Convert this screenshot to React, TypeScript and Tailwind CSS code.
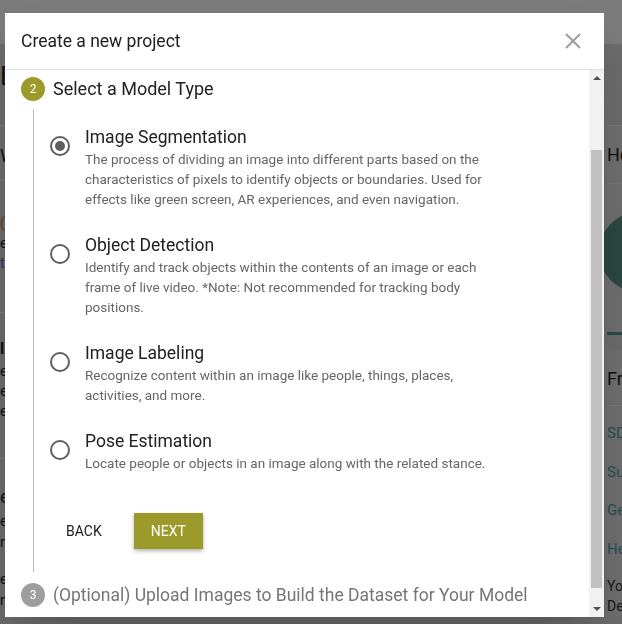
const modelTypes = [
  {
    title: "Image Segmentation",
    description:
      "The process of dividing an image into different parts based on the characteristics of pixels to identify objects or boundaries. Used for effects like green screen, AR experiences, and even navigation.",
    selected: true,
  },
  {
    title: "Object Detection",
    description:
      "Identify and track objects within the contents of an image or each frame of live video. *Note: Not recommended for tracking body positions.",
    selected: false,
  },
  {
    title: "Image Labeling",
    description: "Recognize content within an image like people, things, places, activities, and more.",
    selected: false,
  },
  {
    title: "Pose Estimation",
    description: "Locate people or objects in an image along with the related stance.",
    selected: false,
  },
]

function Radio({ checked }: { checked: boolean }) {
  return (
    <div className="mt-[11px] w-5 h-5 shrink-0 rounded-full border-2 border-[#5f5f5f] flex items-center justify-center">
      {checked && <div className="w-[10px] h-[10px] rounded-full bg-[#5f5f5f]" />}
    </div>
  )
}

function BackgroundPage() {
  return (
    <div className="min-h-[624px] bg-[#d8d8d8] text-[#222]">
      {/* top bar */}
      <div className="h-11 bg-[#f6f6f6]" />
      <div className="flex">
        {/* left column */}
        <div className="w-[596px] shrink-0">
          <div className="h-[81px] pt-4 text-[26px] leading-8">Edge</div>
          <div className="border-t border-[#f2f2f2] h-[55px] pt-4 text-lg">Welcome</div>
          <div className="border-t border-[#f2f2f2] h-[132px] pt-8 text-sm leading-5">
            <div className="text-[#c8741c]">(</div>
            <div>es</div>
            <div className="text-[#3a6ed0]">t</div>
          </div>
          <div className="border-t border-[#f2f2f2] h-[146px] pt-6 text-sm leading-5">
            <div className="font-bold text-base">ls</div>
            <div>e</div>
            <div>e</div>
            <div>e</div>
          </div>
          <div className="border-t border-[#f2f2f2] pt-6 text-sm leading-[21px]">
            <div className="text-lg">e</div>
            <div>e</div>
            <div>ne</div>
            <div className="mt-4">e</div>
            <div>ne</div>
          </div>
        </div>
        {/* right column */}
        <div className="w-[260px] shrink-0 pl-[11px]">
          <div className="mt-[81px] bg-[#dedede] border-t border-[#f2f2f2]">
            <div className="h-[57px] flex items-center text-lg">Help center</div>
            <div className="border-t border-[#f2f2f2] h-[149px] pt-7">
              <div className="w-20 h-20 rounded-full bg-[#568c80] -ml-2" />
            </div>
            <div className="h-[3px] bg-[#55948a]" />
          </div>
          <div className="mt-[14px] bg-[#dedede]">
            <div className="h-[56px] flex items-end pb-3 text-lg">Frequently asked</div>
            <div className="border-t border-[#f2f2f2] pt-4 text-[15px] text-[#4f9ba0] space-y-[16px]">
              <div>SDK</div>
              <div>Support</div>
              <div>Get started</div>
              <div>Help</div>
            </div>
            <div className="mt-4 text-sm leading-5 text-[#333]">
              <div>You</div>
              <div>Details</div>
            </div>
          </div>
        </div>
      </div>
    </div>
  )
}

export default function App() {
  return (
    <div className="relative w-[622px] h-[624px] overflow-hidden font-['Roboto',sans-serif]">
      <BackgroundPage />

      {/* dimmed overlay */}
      <div className="fixed inset-0 bg-black/50 pl-[5px] pt-[13px]">
        <div className="w-[599px] h-[604px] bg-white shadow-2xl flex flex-col">
          {/* header */}
          <div className="h-[57px] shrink-0 flex items-center justify-between pl-4 pr-[23px] border-b border-[#e0e0e0]">
            <h2 className="text-[17.5px] text-[#212121]">Create a new project</h2>
            <button className="text-[#9e9e9e]">
              <svg width="16" height="16" viewBox="0 0 16 16" fill="none" stroke="currentColor" strokeWidth="2">
                <path d="M1 1L15 15M15 1L1 15" />
              </svg>
            </button>
          </div>

          {/* body */}
          <div className="flex flex-1 min-h-0">
            <div className="flex-1 overflow-hidden pl-4 pt-[5px]">
              {/* step 2 */}
              <div className="flex items-center gap-2">
                <div className="w-6 h-6 rounded-full bg-[#9c9a2b] text-white text-xs flex items-center justify-center">
                  2
                </div>
                <span className="text-[18px] text-[#212121]">Select a Model Type</span>
              </div>

              <div className="ml-3 mt-[7px] border-l border-[#bdbdbd] pl-4 pt-4 pb-[23px]">
                <div className="flex flex-col gap-6">
                  {modelTypes.map((m) => (
                    <label key={m.title} className="flex items-start gap-[15px]">
                      <Radio checked={m.selected} />
                      <div>
                        <div className="text-[17.5px] leading-6 text-[#212121]">{m.title}</div>
                        <p className="max-w-[415px] text-[13.5px] leading-5 text-[#666]">{m.description}</p>
                      </div>
                    </label>
                  ))}
                </div>

                <div className="mt-10 flex gap-4">
                  <button className="h-9 px-4 text-sm text-[#212121] uppercase">Back</button>
                  <button className="h-9 px-[17px] text-sm text-white uppercase bg-[#9c9a2b] shadow-[0_2px_4px_rgba(0,0,0,0.3)]">
                    Next
                  </button>
                </div>
              </div>

              {/* step 3 */}
              <div className="mt-[10px] flex items-center gap-2">
                <div className="w-6 h-6 rounded-full bg-[#9e9e9e] text-white text-xs flex items-center justify-center">
                  3
                </div>
                <span className="text-[17.5px] text-[#757575] whitespace-nowrap">
                  (Optional) Upload Images to Build the Dataset for Your Model
                </span>
              </div>
            </div>

            {/* scrollbar */}
            <div className="w-[15px] shrink-0 bg-[#f1f1f1] flex flex-col items-center">
              <div className="h-4 flex items-center justify-center">
                <div className="w-0 h-0 border-l-[4px] border-r-[4px] border-b-[4px] border-l-transparent border-r-transparent border-b-[#505050]" />
              </div>
              <div className="mt-[64px] h-[438px] w-[11px] bg-[#c1c1c1]" />
              <div className="mt-auto h-4 flex items-center justify-center">
                <div className="w-0 h-0 border-l-[4px] border-r-[4px] border-t-[4px] border-l-transparent border-r-transparent border-t-[#505050]" />
              </div>
            </div>
          </div>
        </div>
      </div>
    </div>
  )
}
